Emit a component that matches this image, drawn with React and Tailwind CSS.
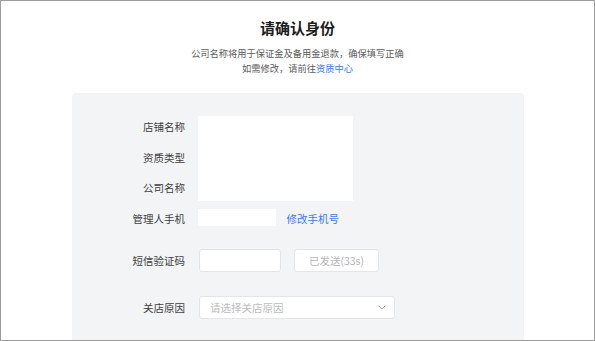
export default function App() {
  const font = { fontFamily: '"Noto Sans CJK SC", "Noto Sans", sans-serif' };
  return (
    <div
      className="w-[595px] h-[341px] overflow-hidden bg-white border border-[#9c9c9c] flex flex-col"
      style={font}
    >
      <div className="flex flex-col items-center pt-[17px]">
        <div className="text-[15px] leading-[20px] font-bold text-[#1d1d1f]">请确认身份</div>
        <div className="mt-[7.5px] text-[9.25px] leading-[15px] text-[#5c5c5c]">
          公司名称将用于保证金及备用金退款，确保填写正确
        </div>
        <div className="text-[9.25px] leading-[15px] text-[#5c5c5c]">
          如需修改，请前往<span className="text-[#3a78f2]">资质中心</span>
        </div>
      </div>

      <div className="ml-[71px] mt-[17.5px] w-[452px] flex-1 rounded-t-[4px] bg-[#f3f4f6] pt-[19px] text-[10.5px]">
        <div className="flex">
          <div className="w-[113px] flex flex-col items-end text-[#404040]">
            <div className="h-[30.5px] leading-[30.5px]">店铺名称</div>
            <div className="h-[30.5px] leading-[30.5px]">资质类型</div>
            <div className="h-[30.5px] leading-[30.5px]">公司名称</div>
          </div>
          <div className="ml-[13px] mt-[4px] w-[155px] h-[85px] bg-white" />
        </div>

        <div className="flex items-center h-[30px]">
          <div className="w-[113px] text-right text-[#404040]">管理人手机</div>
          <div className="ml-[13px] w-[78px] h-[17px] -mt-[3px] bg-white" />
          <div className="ml-[10.5px] text-[#3a78f2]">修改手机号</div>
        </div>

        <div className="mt-[15px] flex items-center h-[24px]">
          <div className="w-[113px] text-right text-[#404040]">短信验证码</div>
          <div className="ml-[14px] w-[82px] h-[23px] rounded-[3px] border border-[#e3e5ea] bg-white" />
          <div className="ml-[13px] w-[85px] h-[23px] rounded-[3px] border border-[#e3e5ea] bg-white flex items-center justify-center text-[#b5b5b5]">
            已发送(33s)
          </div>
        </div>

        <div className="mt-[23px] flex items-center h-[24px]">
          <div className="w-[113px] text-right text-[#404040]">关店原因</div>
          <div className="ml-[14px] w-[196px] h-[23px] rounded-[3px] border border-[#e3e5ea] bg-white flex items-center justify-between pl-[10px] pr-[8px] text-[#bdbdbd]">
            <span>请选择关店原因</span>
            <svg width="8" height="5" viewBox="0 0 8 5" fill="none">
              <path d="M0.7 0.7 L4 4 L7.3 0.7" stroke="#a8a8a8" strokeWidth="1" />
            </svg>
          </div>
        </div>
      </div>
    </div>
  );
}
